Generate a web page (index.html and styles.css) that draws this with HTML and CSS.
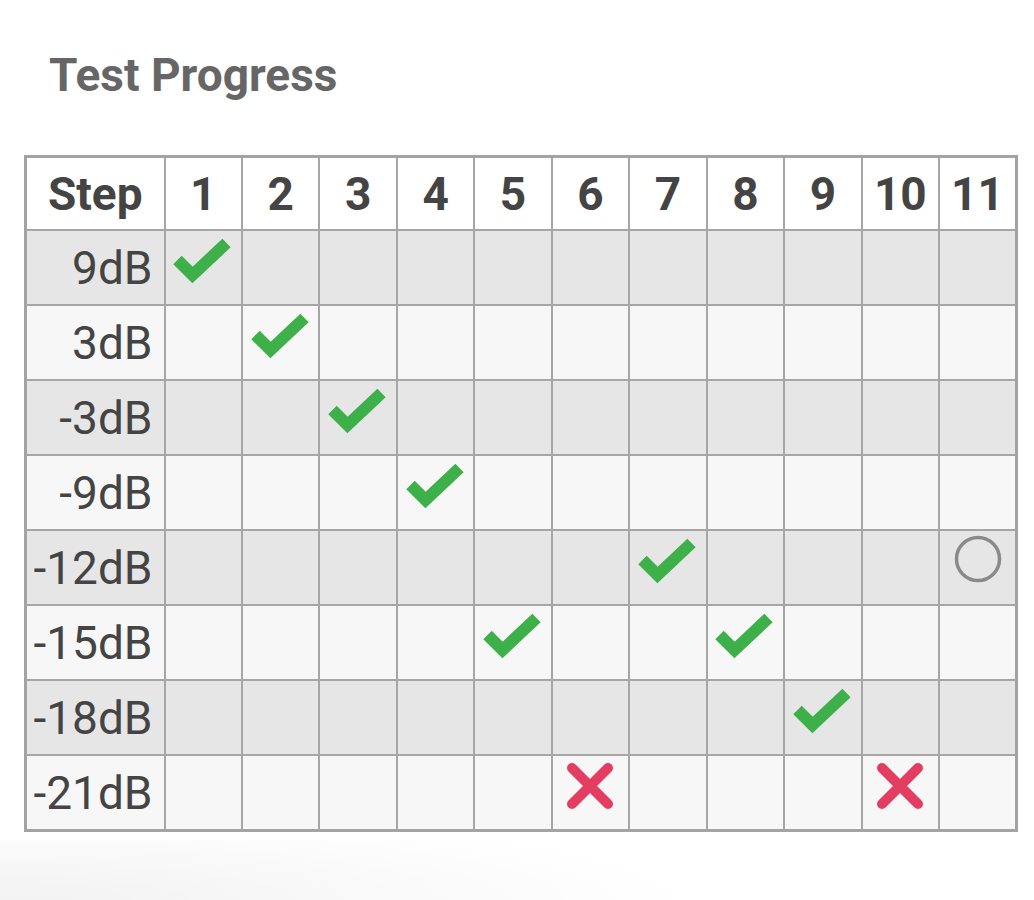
FILE: index.html
```html
<!DOCTYPE html>
<html>
<head>
<meta charset="utf-8">
<link rel="stylesheet" href="styles.css">
</head>
<body>
<div class="page">
  <h2 class="title">Test Progress</h2>
  <table class="grid">
    <colgroup>
      <col class="c-step">
      <col span="11" class="c-num">
    </colgroup>
    <thead>
      <tr><th class="step">Step</th><th>1</th><th>2</th><th>3</th><th>4</th><th>5</th><th>6</th><th>7</th><th>8</th><th>9</th><th>10</th><th>11</th></tr>
    </thead>
    <tbody>
      <tr><td class="lbl">9dB</td><td><svg class="ok" viewBox="0 0 60 48" width="60" height="48"><polyline points="4.5,24 19.5,39 53.5,7"/></svg></td><td></td><td></td><td></td><td></td><td></td><td></td><td></td><td></td><td></td><td></td></tr>
      <tr><td class="lbl">3dB</td><td></td><td><svg class="ok" viewBox="0 0 60 48" width="60" height="48"><polyline points="4.5,24 19.5,39 53.5,7"/></svg></td><td></td><td></td><td></td><td></td><td></td><td></td><td></td><td></td><td></td></tr>
      <tr><td class="lbl">-3dB</td><td></td><td></td><td><svg class="ok" viewBox="0 0 60 48" width="60" height="48"><polyline points="4.5,24 19.5,39 53.5,7"/></svg></td><td></td><td></td><td></td><td></td><td></td><td></td><td></td><td></td></tr>
      <tr><td class="lbl">-9dB</td><td></td><td></td><td></td><td><svg class="ok" viewBox="0 0 60 48" width="60" height="48"><polyline points="4.5,24 19.5,39 53.5,7"/></svg></td><td></td><td></td><td></td><td></td><td></td><td></td><td></td></tr>
      <tr><td class="lbl">-12dB</td><td></td><td></td><td></td><td></td><td></td><td></td><td><svg class="ok" viewBox="0 0 60 48" width="60" height="48"><polyline points="4.5,24 19.5,39 53.5,7"/></svg></td><td></td><td></td><td></td><td><svg class="pending" viewBox="0 0 52 52" width="52" height="52"><circle cx="26" cy="26" r="21.5"/></svg></td></tr>
      <tr><td class="lbl">-15dB</td><td></td><td></td><td></td><td></td><td><svg class="ok" viewBox="0 0 60 48" width="60" height="48"><polyline points="4.5,24 19.5,39 53.5,7"/></svg></td><td></td><td></td><td><svg class="ok" viewBox="0 0 60 48" width="60" height="48"><polyline points="4.5,24 19.5,39 53.5,7"/></svg></td><td></td><td></td><td></td></tr>
      <tr><td class="lbl">-18dB</td><td></td><td></td><td></td><td></td><td></td><td></td><td></td><td></td><td><svg class="ok" viewBox="0 0 60 48" width="60" height="48"><polyline points="4.5,24 19.5,39 53.5,7"/></svg></td><td></td><td></td></tr>
      <tr><td class="lbl">-21dB</td><td></td><td></td><td></td><td></td><td></td><td><svg class="bad" viewBox="0 0 50 50" width="50" height="50"><path d="M7 7L43 43M43 7L7 43"/></svg></td><td></td><td></td><td></td><td><svg class="bad" viewBox="0 0 50 50" width="50" height="50"><path d="M7 7L43 43M43 7L7 43"/></svg></td><td></td></tr>
    </tbody>
  </table>
</div>
<div class="shade"></div>
</body>
</html>
```
FILE: styles.css
```css
html, body {
  margin: 0;
  padding: 0;
  background: #ffffff;
}
body {
  width: 1034px;
  height: 900px;
  overflow: hidden;
  position: relative;
  font-family: Roboto, "Noto Sans", sans-serif;
}
.page {
  padding: 48px 0 0 24px;
}
.title {
  margin: 0 0 0 25px;
  font-size: 46px;
  font-weight: 700;
  color: #666666;
  line-height: 54px;
  height: 54px;
}
.grid {
  margin-top: 53px;
  border-collapse: collapse;
  table-layout: fixed;
  width: 994px;
  border: 3px solid #a3a3a3;
}
.c-step { width: 139px; }
.grid th, .grid td {
  border: 2px solid #a6a6a6;
  height: 73px;
  padding: 0;
  color: #444444;
  font-size: 46px;
  vertical-align: middle;
}
.grid th {
  height: 71px;
  background: #ffffff;
  font-weight: 700;
  text-align: center;
}
.grid tbody tr:nth-child(odd) td { background: #e6e6e6; }
.grid tbody tr:nth-child(even) td { background: #f7f7f7; }
.grid td.lbl {
  text-align: right;
  padding-right: 11px;
  font-weight: 400;
}
.grid td svg {
  display: block;
  margin: 0 auto;
}
svg.ok {
  margin-bottom: 15px !important;
}
svg.ok polyline {
  fill: none;
  stroke: #3eb049;
  stroke-width: 12;
  stroke-linejoin: miter;
}
svg.bad {
  margin-bottom: 14px !important;
}
svg.bad path {
  fill: none;
  stroke: #e43d62;
  stroke-width: 10;
  stroke-linecap: round;
}
svg.pending {
  margin-bottom: 18px !important;
}
svg.pending circle {
  fill: #e6e6e6;
  stroke: #8a8a8a;
  stroke-width: 3.5;
}
.shade {
  position: absolute;
  left: 0;
  right: 0;
  bottom: 0;
  height: 60px;
  background: radial-gradient(ellipse 700px 90px at 0% 100%, rgba(0,0,0,0.05), rgba(0,0,0,0) 100%);
}
```
